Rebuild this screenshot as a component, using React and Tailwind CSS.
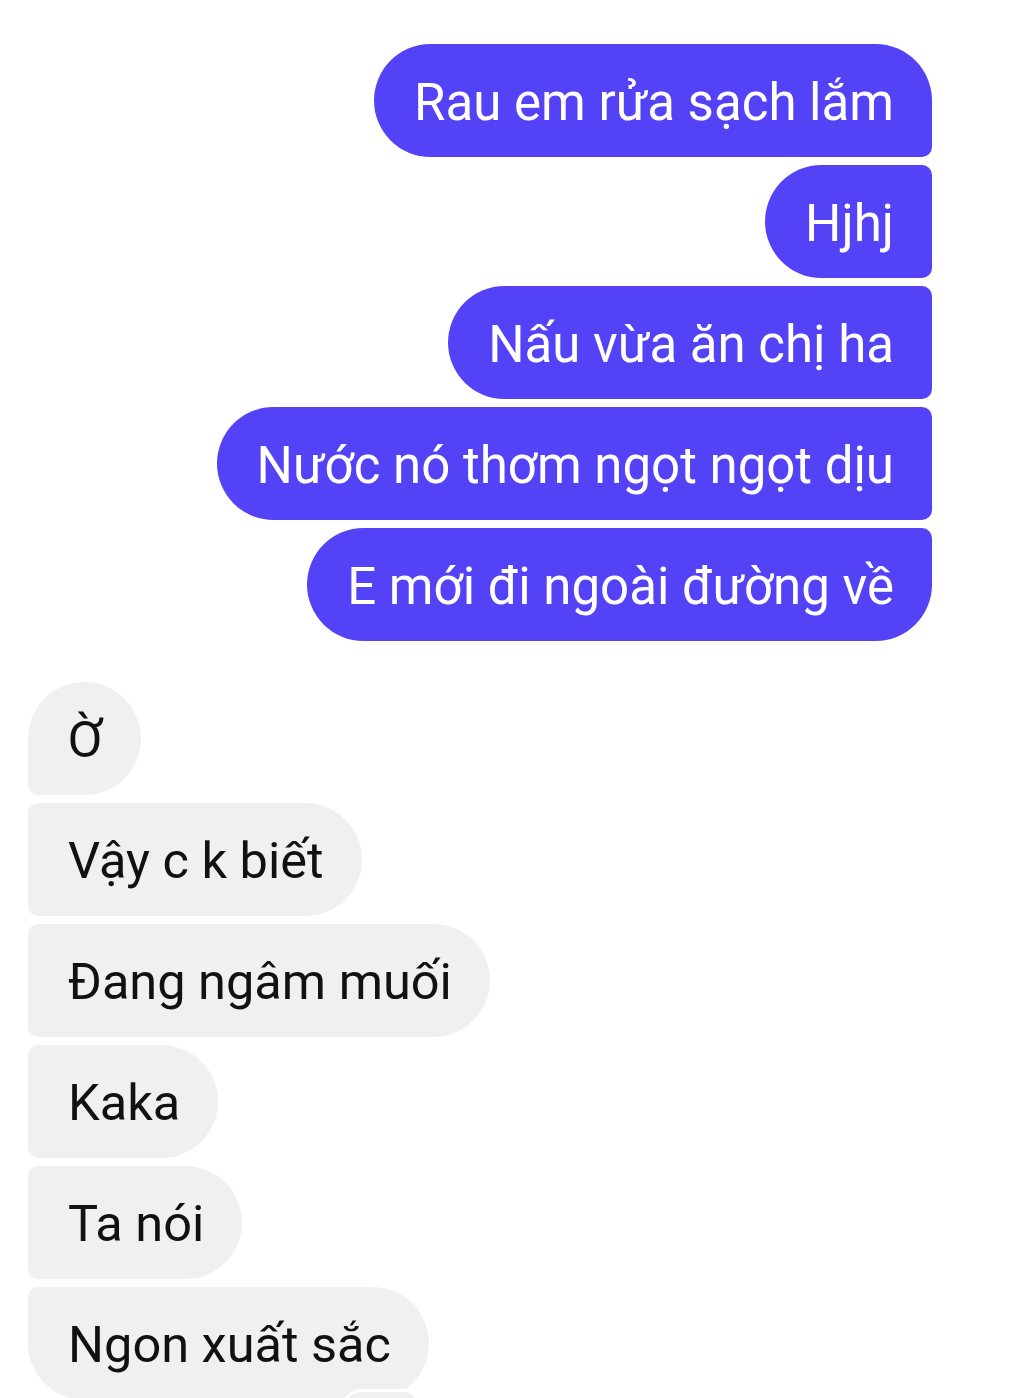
import React from 'react';

const sent = [
  { text: 'Rau em rửa sạch lắm', shape: 'rounded-[57px] rounded-br-[10px]' },
  { text: 'Hjhj', shape: 'rounded-[57px] rounded-tr-[10px] rounded-br-[10px]' },
  { text: 'Nấu vừa ăn chị ha', shape: 'rounded-[57px] rounded-tr-[10px] rounded-br-[10px]' },
  { text: 'Nước nó thơm ngọt ngọt dịu', shape: 'rounded-[57px] rounded-tr-[10px] rounded-br-[10px]' },
  { text: 'E mới đi ngoài đường về', shape: 'rounded-[57px] rounded-tr-[10px]' },
];

const received = [
  { text: 'Ờ', shape: 'rounded-[57px] rounded-bl-[10px]' },
  { text: 'Vậy c k biết', shape: 'rounded-[57px] rounded-tl-[10px] rounded-bl-[10px]' },
  { text: 'Đang ngâm muối', shape: 'rounded-[57px] rounded-tl-[10px] rounded-bl-[10px]' },
  { text: 'Kaka', shape: 'rounded-[57px] rounded-tl-[10px] rounded-bl-[10px]' },
  { text: 'Ta nói', shape: 'rounded-[57px] rounded-tl-[10px] rounded-bl-[10px]' },
  { text: 'Ngon xuất sắc', shape: 'rounded-[57px] rounded-tl-[10px]', reaction: true },
];

const App = () => {
  return (
    <div className="w-[1010px] h-[1398px] overflow-hidden bg-white pl-[28px] pr-[78px] pt-[44px] font-['Roboto',sans-serif]">
      {/* Sent messages */}
      <div className="flex flex-col items-end gap-[8px]">
        {sent.map((m, i) => (
          <div
            key={i}
            className={`h-[113px] flex items-center pl-[40px] pr-[38px] pt-[3px] bg-[#5442f6] text-white text-[51px] leading-none whitespace-nowrap ${m.shape}`}
          >
            {m.text}
          </div>
        ))}
      </div>

      {/* Received messages */}
      <div className="flex flex-col items-start gap-[8px] mt-[41px]">
        {received.map((m, i) => (
          <div key={i} className="relative">
            <div
              className={`h-[113px] flex items-center pl-[40px] pr-[38px] pt-[3px] bg-[#f0f0f0] text-[#111111] text-[50.5px] leading-none whitespace-nowrap ${m.shape}`}
            >
              {m.text}
            </div>
            {m.reaction && (
              <div className="absolute left-[314px] top-[102px] w-[80px] h-[40px] rounded-full bg-[#f0f0f0] border-[3px] border-white" />
            )}
          </div>
        ))}
      </div>
    </div>
  );
};

export default App;
